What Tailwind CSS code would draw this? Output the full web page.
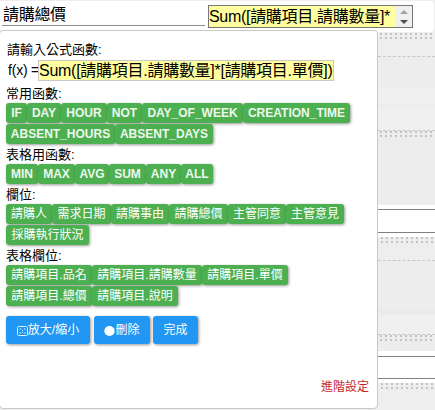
<!DOCTYPE html>
<html lang="zh-Hant">
<head>
<meta charset="utf-8">
<title>公式設定</title>
<script src="https://cdn.jsdelivr.net/npm/@tailwindcss/browser@4"></script>
</head>
<body class="relative h-[410px] w-[435px] overflow-hidden bg-[#eeeeee] font-['Liberation_Sans','Noto_Sans_CJK_TC',sans-serif] text-black">
<svg class="absolute h-0 w-0"><defs><pattern id="grip" width="5" height="4" patternUnits="userSpaceOnUse"><rect width="2" height="2" fill="#c2c2c2"/></pattern></defs></svg>

<!-- form behind the formula panel -->
<main class="flex h-full flex-col">
  <header class="mt-px flex h-[31px] w-[434px] shrink-0 rounded-r-[4px] bg-white">
    <div class="ml-[2px] mt-px h-[24px] w-[203px] whitespace-nowrap border-b border-[#8c8c8c] pl-px text-[16px] leading-[26px] tracking-[-0.3px]">請購總價</div>
    <div class="ml-[3px] mt-[4px] flex h-[23px] w-[205px] overflow-hidden border border-[#767676] bg-[#ffff9f]">
      <div class="w-[186px] whitespace-nowrap text-[16px] leading-[21px] tracking-[-0.3px]">Sum([請購項目.請購數量]*</div>
      <div class="flex w-[17px] flex-col items-center justify-center gap-[6px] bg-[#f0f0f0]">
        <svg width="8" height="4"><path d="M0 4L4 0L8 4Z" fill="#a3a3a3"/></svg>
        <svg width="8" height="4"><path d="M0 0H8L4 4Z" fill="#505050"/></svg>
      </div>
    </div>
  </header>
  <section class="ml-[378px] flex w-[57px] flex-col">
    <div class="h-[24px] pl-[2px] pt-px"><svg width="53" height="6"><rect width="53" height="6" fill="url(#grip)"/></svg></div>
    <div class="h-[31px] border-t border-dashed border-[#c8c8c8] bg-[#ededed]"></div>
    <div class="h-[17px] bg-[#f0f0f0]"></div>
    <div class="h-[6px] bg-[#ededed]"></div>
    <div class="h-[20px] bg-[#f0f0f0]"></div>
    <div class="h-[75px] border-t border-dashed border-[#c8c8c8] bg-[#ededed] pl-[2px]"><svg width="53" height="6"><rect width="53" height="6" fill="url(#grip)"/></svg></div>
    <div class="h-[32px] bg-white pt-[4px]"><div class="h-[24px] border-y border-[#808080]"></div></div>
    <div class="h-[23px] pl-[3px]"><svg width="53" height="6"><rect width="53" height="6" fill="url(#grip)"/></svg></div>
    <div class="h-[49px] border-t border-dashed border-[#c8c8c8] bg-[#ededed]"></div>
    <div class="h-[6px] bg-[#ebebeb]"></div>
    <div class="h-[19px] bg-[#f0f0f0]"></div>
    <div class="h-[17px] border-t border-dashed border-[#c8c8c8] bg-[#ededed] pl-[2px]"><svg width="53" height="6"><rect width="53" height="6" fill="url(#grip)"/></svg></div>
    <div class="h-[32px] bg-white pt-[5px]"><div class="h-[23px] border-y border-[#808080]"></div></div>
    <div class="h-[27px] pl-[3px]"><svg width="53" height="6"><rect width="53" height="6" fill="url(#grip)"/></svg></div>
  </section>
</main>

<!-- formula panel -->
<div class="absolute -left-px top-[30px] flex h-[379px] w-[379px] flex-col rounded-[4px] border border-[#c8c8c8] bg-white pl-[6px] text-[13px] whitespace-nowrap">
  <div class="mt-[9px] h-[19px] pl-px leading-[20px]">請輸入公式函數:</div>
  <div class="flex h-[22px] items-center">
    <span class="w-[32px] pl-[2px] text-[14px] tracking-[-0.2px]">f(x) =</span>
    <div class="h-[21px] w-[296px] border border-[#c8c8c8] bg-[#ffff9f] text-[16px] leading-[19px] tracking-[-0.27px]">Sum([請購項目.請購數量]*[請購項目.單價])</div>
  </div>
  <div class="mt-[3px] h-[19px] leading-[19px]">常用函數:</div>
  <div class="flex h-[21px] text-[12px] leading-[20px] font-bold text-[#edf8ed] *:h-[20px] *:shrink-0 *:rounded-[3px] *:bg-[#4caf50] *:text-center *:shadow-[1px_1px_3px_rgba(0,0,0,0.4)]">
    <span class="w-[21px]">IF</span><span class="w-[34px]">DAY</span><span class="w-[46px]">HOUR</span><span class="w-[35px]">NOT</span><span class="w-[101px]">DAY_OF_WEEK</span><span class="w-[107px]">CREATION_TIME</span>
  </div>
  <div class="flex h-[21px] text-[12px] leading-[20px] font-bold text-[#edf8ed] *:h-[20px] *:shrink-0 *:rounded-[3px] *:bg-[#4caf50] *:text-center *:shadow-[1px_1px_3px_rgba(0,0,0,0.4)]">
    <span class="w-[109px]">ABSENT_HOURS</span><span class="w-[98px]">ABSENT_DAYS</span>
  </div>
  <div class="h-[19px] leading-[19px]">表格用函數:</div>
  <div class="flex h-[21px] text-[12px] leading-[20px] font-bold text-[#edf8ed] *:h-[20px] *:shrink-0 *:rounded-[3px] *:bg-[#4caf50] *:text-center *:shadow-[1px_1px_3px_rgba(0,0,0,0.4)]">
    <span class="w-[32px]">MIN</span><span class="w-[37px]">MAX</span><span class="w-[34px]">AVG</span><span class="w-[37px]">SUM</span><span class="w-[35px]">ANY</span><span class="w-[32px]">ALL</span>
  </div>
  <div class="h-[19px] leading-[19px]">欄位:</div>
  <div class="flex h-[21px] text-[12px] leading-[20px] text-white *:h-[20px] *:shrink-0 *:rounded-[3px] *:bg-[#4caf50] *:text-center *:shadow-[1px_1px_3px_rgba(0,0,0,0.4)]">
    <span class="w-[46px]">請購人</span><span class="w-[59px]">需求日期</span><span class="w-[58px]">請購事由</span><span class="w-[59px]">請購總價</span><span class="w-[58px]">主管同意</span><span class="w-[58px]">主管意見</span>
  </div>
  <div class="flex h-[21px] text-[12px] leading-[20px] text-white *:h-[20px] *:shrink-0 *:rounded-[3px] *:bg-[#4caf50] *:text-center *:shadow-[1px_1px_3px_rgba(0,0,0,0.4)]">
    <span class="w-[83px]">採購執行狀況</span>
  </div>
  <div class="h-[19px] leading-[19px]">表格欄位:</div>
  <div class="flex h-[21px] text-[12px] leading-[20px] text-white *:h-[20px] *:shrink-0 *:rounded-[3px] *:bg-[#4caf50] *:text-center *:shadow-[1px_1px_3px_rgba(0,0,0,0.4)]">
    <span class="w-[86px]">請購項目.品名</span><span class="w-[110px]">請購項目.請購數量</span><span class="w-[86px]">請購項目.單價</span>
  </div>
  <div class="flex h-[21px] text-[12px] leading-[20px] text-white *:h-[20px] *:shrink-0 *:rounded-[3px] *:bg-[#4caf50] *:text-center *:shadow-[1px_1px_3px_rgba(0,0,0,0.4)]">
    <span class="w-[86px]">請購項目.總價</span><span class="w-[86px]">請購項目.說明</span>
  </div>
  <div class="mt-[9px] flex h-[28px] text-[12px] text-white *:flex *:items-center *:justify-center *:rounded-[3px] *:bg-[#2196f3] *:shadow-[1px_1px_3px_rgba(0,0,0,0.4)]">
    <span class="w-[84px]"><svg class="mt-[2px] shrink-0" width="11" height="10" fill="none" stroke="#d5f3ff"><rect x=".5" y=".5" width="10" height="9" rx="1"/><path d="M2.5 3.5L4 2.5M8.5 3.5L7 2.5M2.5 6.5L4 7.5M8.5 6.5L7 7.5M5 4.5H6M5 6.5H6"/></svg>放大/縮小</span>
    <span class="ml-[4px] w-[56px]"><svg class="mt-[2px] shrink-0" width="11" height="10"><ellipse cx="5.5" cy="5" rx="5.2" ry="5" fill="#fff"/></svg>刪除</span>
    <span class="ml-[3px] w-[45px]">完成</span>
  </div>
  <div class="mt-[33px] h-[18px] pr-[8px] text-right text-[12px] leading-[20px] text-[#c62828]">進階設定</div>
</div>
</body>
</html>
